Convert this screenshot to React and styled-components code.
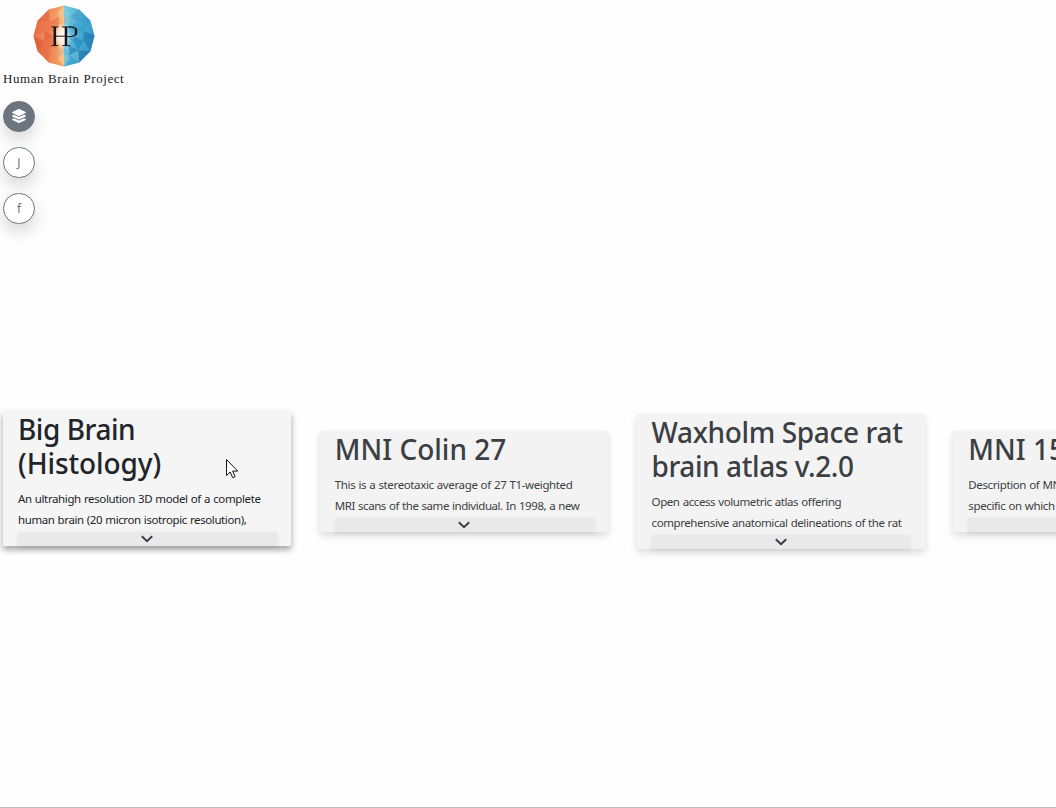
import React from 'react';
import styled, { createGlobalStyle } from 'styled-components';

const Global = createGlobalStyle`
  * { box-sizing: border-box; }
  html, body { margin: 0; height: 100%; overflow: hidden; background: #fefefe; }
  body { font-family: "Noto Sans", "Open Sans", sans-serif; color: #212529; }
`;

const Page = styled.div`
  height: 808px;
  overflow: hidden;
  display: flex;
  flex-direction: column;
  border-bottom: 1px solid #bdbdbd;
`;

const Header = styled.header`
  flex: none;
  width: 128px;
  height: 101px;
  padding-top: 4px;
`;

const Emblem = styled.svg`
  display: block;
  margin: 0 0 0 32px;
`;

const Brand = styled.div`
  margin: 2px 0 0 3px;
  font: 13px/17px "Liberation Serif", serif;
  letter-spacing: 0.57px;
  white-space: nowrap;
  color: #1c1c1c;
`;

const Tools = styled.nav`
  flex: none;
  height: 312px;
  padding-left: 3px;
  display: flex;
  flex-direction: column;
  gap: 15px;
`;

const RoundButton = styled.button`
  width: 32px;
  height: 31px;
  padding: 0;
  display: flex;
  align-items: center;
  justify-content: center;
  border: 1px solid #6c757d;
  border-radius: 16px;
  background: ${p => (p.$filled ? '#6c757d' : '#fff')};
  color: ${p => (p.$filled ? '#fff' : '#6c757d')};
  font: 12px/18px "Noto Sans", sans-serif;
  box-shadow: 0 8px 16px rgba(0, 0, 0, 0.15);
`;

const LayersIcon = styled.svg`
  display: block;
  margin-bottom: 1px;
`;

const Row = styled.main`
  flex: none;
  height: 137px;
  padding-left: 3px;
  width: 1400px;
  display: flex;
  align-items: center;
  gap: 28.4px;
`;

const Card = styled.article`
  flex: none;
  width: 288.4px;
  padding: 0 14.5px 0 15px;
  position: relative;
  top: ${p => (p.$active ? '-3px' : '0')};
  background: ${p => (p.$active ? '#f5f5f5' : '#f3f3f3')};
  color: ${p => (p.$active ? '#212529' : '#3b3f43')};
  box-shadow: ${p => (p.$active
    ? '0 4px 6px rgba(0,0,0,.3), 0 2px 8px rgba(0,0,0,.08)'
    : '0 4px 8px rgba(0,0,0,.12), 0 1px 6px rgba(0,0,0,.03)')};
`;

const Title = styled.h2`
  margin: 0;
  padding-top: 1px;
  font-size: 28px;
  font-weight: 500;
  line-height: 34px;
`;

const Body = styled.div`
  padding-top: 8px;
  height: 52px;
  font-size: 11.5px;
  line-height: 21px;
  word-spacing: 0.5px;
`;

const Line = styled.span`
  display: block;
  width: max-content;
  white-space: nowrap;
  letter-spacing: ${p => p.$track || 0}px;
`;

const Expand = styled.div`
  height: 14px;
  display: flex;
  align-items: center;
  justify-content: center;
  background: #e9e9e9;
  box-shadow: 0 2px 5px rgba(0, 0, 0, 0.08);
`;

const Cursor = styled.svg`
  position: absolute;
  left: 223px;
  top: 48px;
`;

const ring = (r, off = 0) =>
  Array.from({ length: 12 }, (_, i) => {
    const a = ((i * 30 + off - 90) * Math.PI) / 180;
    return [32 + r * Math.cos(a), 32 + r * Math.sin(a)];
  });
const outer = ring(30.5);
const inner = ring(20, 15);
const core = ring(10);
const rimColors = ['#51b6d8', '#3a9fca', '#58b9d8', '#2789b8', '#2a78a9', '#4aa8cf', '#ef8d52', '#e56c43', '#e0583c', '#ec7850', '#e2654a', '#ef9560'];
const midColors = ['#7acae1', '#2f91c4', '#3eadd4', '#1f7db1', '#5cbfdd', '#93d4e4', '#f8b878', '#ef8a58', '#e8694a', '#f19a70', '#ee7d51', '#f5a96a'];
const coreColors = ['#a9dce8', '#4db2d8', '#71c7df', '#48a8d1', '#86cfe2', '#c2e6e8', '#fbd09a', '#f4a06b', '#f6b389', '#ef8e60', '#f7b57d', '#fcd5a0'];
const pts = (...a) => a.map(p => p.map(n => n.toFixed(2)).join(',')).join(' ');

function Logo() {
  return (
    <Emblem width="64" height="64" viewBox="0 0 64 64">
      <defs>
        <linearGradient id="warm" x1="0" x2="1">
          <stop offset="0" stopColor="#e8623c" />
          <stop offset=".55" stopColor="#ee7f50" />
          <stop offset="1" stopColor="#fac486" />
        </linearGradient>
        <linearGradient id="cool" x1="0" x2="1" y1=".2" y2=".8">
          <stop offset="0" stopColor="#8ad2e6" />
          <stop offset=".5" stopColor="#3ba3cf" />
          <stop offset="1" stopColor="#1c70a8" />
        </linearGradient>
        <radialGradient id="glow">
          <stop offset="0" stopColor="#fff" />
          <stop offset=".45" stopColor="#fff" stopOpacity=".75" />
          <stop offset="1" stopColor="#fff" stopOpacity="0" />
        </radialGradient>
      </defs>
      <polygon points={pts(...outer.slice(0, 7))} fill="url(#cool)" />
      <polygon points={pts(...outer.slice(6), outer[0])} fill="url(#warm)" />
      {outer.map((p, i) => {
        const n = (i + 1) % 12;
        return (
          <g key={i} opacity=".42">
            <polygon points={pts(p, outer[n], inner[i])} fill={rimColors[i]} />
            <polygon points={pts(outer[n], inner[i], inner[n])} fill={midColors[n]} />
            <polygon points={pts(inner[i], inner[n], core[n])} fill={rimColors[i]} />
            <polygon points={pts(core[i], inner[i], core[n])} fill={midColors[i]} />
            <polygon points={pts(core[i], core[n], [32, 32])} fill={coreColors[i]} />
          </g>
        );
      })}
      <path d="M32 2v19l-7-12zM32 43l-6 12 6 7z" fill="#fbc98c" opacity=".65" />
      <path d="M32 2v19l7-12zM32 43l6 12-6 7z" fill="#76cbe2" opacity=".6" />
      <ellipse cx="30" cy="32" rx="9" ry="14" fill="url(#glow)" />
      <g fill="none" stroke="#15151a">
        <path d="M22.8 23v18.5M34 23v18.5" strokeWidth="2.5" />
        <path d="M19.5 22.9h6.8M19.5 41.6h6.8M30 22.9h8M30.5 41.6h7.5M23 32.2h11" strokeWidth="1" />
        <path d="M37 22.9c5.3 0 7.8 1.5 7.8 4.9s-2.5 5-9.8 5" strokeWidth="1.1" />
        <path d="M43.9 24.4v6.7" strokeWidth="2.2" />
      </g>
    </Emblem>
  );
}

function Layers() {
  return (
    <LayersIcon width="14" height="14" viewBox="0 0 512 512" fill="currentColor">
      <path d="M12.41 148.02l232.94 105.67c6.8 3.09 14.49 3.09 21.29 0l232.94-105.67c16.55-7.51 16.55-32.52 0-40.03L266.65 2.31a25.607 25.607 0 0 0-21.29 0L12.41 107.98c-16.55 7.51-16.55 32.53 0 40.04zm487.18 88.28l-58.09-26.33-161.64 73.27c-7.56 3.43-15.59 5.17-23.86 5.17s-16.29-1.74-23.86-5.17L70.51 209.97l-58.1 26.33c-16.55 7.5-16.55 32.5 0 40l232.94 105.59c6.8 3.08 14.49 3.08 21.29 0L499.59 276.3c16.55-7.5 16.55-32.5 0-40zm0 127.8l-57.87-26.23-161.86 73.37c-7.56 3.43-15.59 5.17-23.86 5.17s-16.29-1.74-23.86-5.17L70.29 337.87 12.41 364.1c-16.55 7.5-16.55 32.5 0 40l232.94 105.59c6.8 3.08 14.49 3.08 21.29 0L499.59 404.1c16.55-7.5 16.55-32.5 0-40z" />
    </LayersIcon>
  );
}

const cards = [
  {
    active: true,
    title: [['Big Brain', -0.45], ['(Histology)', -0.1]],
    body: [['An ultrahigh resolution 3D model of a complete', -0.38], ['human brain (20 micron isotropic resolution),', -0.4]],
  },
  {
    title: [['MNI Colin 27', 0]],
    body: [['This is a stereotaxic average of 27 T1-weighted', -0.37], ['MRI scans of the same individual. In 1998, a new', -0.44]],
  },
  {
    title: [['Waxholm Space rat', -0.35], ['brain atlas v.2.0', -0.42]],
    body: [['Open access volumetric atlas offering', -0.41], ['comprehensive anatomical delineations of the rat', -0.42]],
  },
  {
    title: [['MNI 152', 0]],
    body: [['Description of MNI 152, more', -0.38], ['specific on which version', -0.38]],
  },
];

export default function App() {
  return (
    <Page>
      <Global />
      <Header>
        <Logo />
        <Brand>Human Brain Project</Brand>
      </Header>
      <Tools>
        <RoundButton $filled><Layers /></RoundButton>
        <RoundButton>J</RoundButton>
        <RoundButton>f</RoundButton>
      </Tools>
      <Row>
        {cards.map(c => (
          <Card key={c.title[0][0]} $active={c.active}>
            <Title>{c.title.map(([t, k]) => <Line key={t} $track={k}>{t}</Line>)}</Title>
            <Body>{c.body.map(([t, k]) => <Line key={t} $track={k}>{t}</Line>)}</Body>
            <Expand>
              <svg width="12" height="8" viewBox="0 0 12 8" fill="none" stroke="#3b3f43" strokeWidth="2">
                <path d="M.8 1.2 6 6.2l5.2-5" />
              </svg>
            </Expand>
            {c.active && (
              <Cursor width="13" height="21" viewBox="0 0 13 21">
                <path d="M.5.5v16l3.7-3.5 2.5 5.7 2.4-1-2.5-5.6h5.1z" fill="#fff" stroke="#111" />
              </Cursor>
            )}
          </Card>
        ))}
      </Row>
    </Page>
  );
}
